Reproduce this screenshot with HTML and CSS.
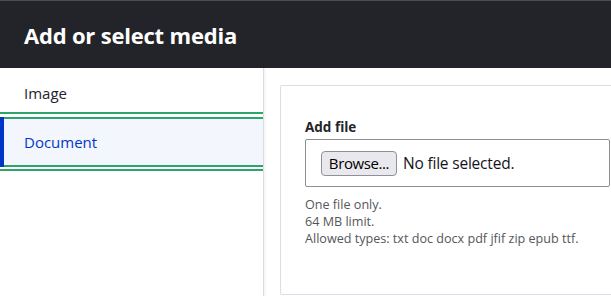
FILE: index.html
```html
<html>

<head>
    <title>Add or select media</title>
    <link rel="stylesheet" href="styles.css">
</head>

<body>
    <div class="dialog">
        <div class="dialog-title">Add or select media</div>
        <div class="dialog-body">
            <!-- media type tabs -->
            <div class="sidebar">
                <div class="tab">Image</div>
                <div class="tab-active">
                    <div class="tab-inner">Document</div>
                </div>
            </div>

            <div class="content">
                <div class="card">
                    <div class="field-label">Add file</div>
                    <div class="file-box">
                        <span class="browse-btn">Browse...</span>
                        <span class="file-status">No file selected.</span>
                    </div>
                    <div class="field-desc">
                        <div>One file only.</div>
                        <div>64 MB limit.</div>
                        <div>Allowed types: txt doc docx pdf jfif zip epub ttf.</div>
                    </div>
                </div>
            </div>
        </div>
    </div>
</body>

</html>
```

FILE: styles.css
```css
* {
    box-sizing: border-box;
    margin: 0;
    padding: 0;
}

body {
    width: 611px;
    height: 296px;
    overflow: hidden;
    background: #ffffff;
    font-family: 'Open Sans', 'Noto Sans', sans-serif;
    color: #222330;
}

.dialog {
    display: flex;
    flex-direction: column;
    height: 296px;
}

.dialog-title {
    height: 68px;
    background-color: #232429;
    border-top: 1px solid #4b4c52;
    color: #ffffff;
    font-size: 22px;
    font-weight: 700;
    letter-spacing: -0.2px;
    padding: 19px 0 0 24px;
}

.dialog-body {
    flex: 1;
    display: flex;
}

/* 왼쪽 탭 목록 */
.sidebar {
    flex: 0 0 264px;
    border-right: 1px solid #dcdcdf;
    box-shadow: 1px 0 2px rgba(0, 0, 0, 0.06);
}

.tab {
    height: 44px;
    padding: 15px 0 0 24px;
    font-size: 15px;
    line-height: 20px;
}

.tab-active {
    border-top: 2px solid #2ba56a;
    border-bottom: 2px solid #2ba56a;
    padding: 3px 0 2px;
}

.tab-inner {
    height: 50px;
    background-color: #f3f6fd;
    border-left: 4px solid #0036c8;
    box-shadow: inset 0 2px 0 #2ba56a, inset 0 -2px 0 #2ba56a;
    color: #0036c8;
    font-size: 15px;
    line-height: 20px;
    padding: 15px 0 0 20px;
}

.content {
    flex: 1;
    overflow: hidden;
    padding: 17px 0 0 16px;
}

.card {
    width: 360px;
    height: 210px;
    border: 1px solid #dedee2;
    border-radius: 2px;
    padding: 33px 0 0 24px;
}

.field-label {
    font-size: 13.5px;
    font-weight: 700;
    line-height: 16px;
    color: #232429;
}

.file-box {
    display: flex;
    align-items: center;
    width: 305px;
    height: 48px;
    margin-top: 4px;
    border: 1px solid #8e8e93;
    border-radius: 2px;
    padding-left: 15px;
}

.browse-btn {
    height: 25px;
    width: 76px;
    background-color: #e9e9ed;
    border: 1px solid #8f8f9d;
    border-radius: 4px;
    font-size: 15px;
    line-height: 22px;
    text-align: center;
    letter-spacing: -0.4px;
    color: #000000;
}

.file-status {
    margin-left: 6px;
    font-size: 15.5px;
    letter-spacing: -0.2px;
    color: #15141a;
}

.field-desc {
    margin-top: 9px;
    font-size: 12.6px;
    line-height: 17px;
    color: #55565b;
}
```
